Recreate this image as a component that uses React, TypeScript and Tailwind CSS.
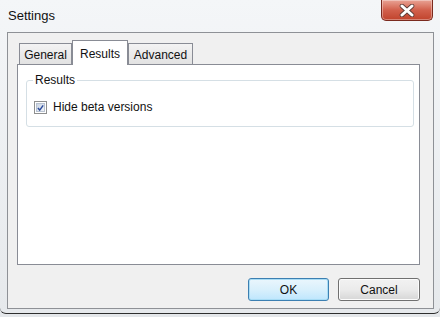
function CloseButton() {
  return (
    <div className="absolute top-0 left-[381px] w-[52px] h-[21px] rounded-b-[5px] border border-t-0 border-[#7a2a1e] bg-gradient-to-b from-[#e8a395] via-[#d2604c] to-[#c0432c] flex items-center justify-center shadow-[inset_0_0_0_1px_rgba(255,255,255,0.35)]">
      <svg width="16" height="13" viewBox="0 0 16 13">
        <path d="M3 2 L13 11 M13 2 L3 11" stroke="#5a3a36" strokeWidth="4.6" strokeLinecap="round" />
        <path d="M3 2 L13 11 M13 2 L3 11" stroke="#ffffff" strokeWidth="3" strokeLinecap="round" />
      </svg>
    </div>
  );
}

function Tab({ label, w, active }: { label: string; w: string; active?: boolean }) {
  if (active) {
    return (
      <div className={`${w} h-[25px] bg-white border border-b-0 border-[#898c95] flex items-start justify-center pt-[4px] relative z-10`}>
        {label}
      </div>
    );
  }
  return (
    <div className={`${w} h-[21px] mb-px bg-gradient-to-b from-[#f3f3f3] to-[#e2e2e2] border border-b-0 border-[#898c95] flex items-center justify-center pt-[2px]`}>
      {label}
    </div>
  );
}

function Checkbox() {
  return (
    <div className="w-[13px] h-[13px] border border-[#8e8f8f] bg-white p-px">
      <div className="w-full h-full bg-gradient-to-br from-[#cbd5e4] to-[#f0f3f8] border border-[#b8c2d0] flex items-center justify-center">
        <svg width="10" height="10" viewBox="0 0 10 10">
          <path d="M1.3 5 L3.9 8 L8.8 1.2" fill="none" stroke="#2c4c9c" strokeWidth="2.1" />
        </svg>
      </div>
    </div>
  );
}

export default function App() {
  return (
    <div className="w-[440px] h-[317px] bg-[#e4e7ea] overflow-hidden font-['Liberation_Sans',Arial,sans-serif] text-[#111]">
      <div className="relative h-[314px] bg-gradient-to-b from-[#f4f6f8] to-[#e6e9ec] border-b border-[#2e2e2e] rounded-b-[6px] flex flex-col">
        <div className="h-[32px] pl-[8px] pt-[8px] text-[13px] leading-[16px]">Settings</div>
        <CloseButton />

        <div className="ml-[7px] w-[427px] h-[277px] bg-[#f0f0f0] border border-[#8e9196] flex flex-col pl-[9px] pt-[7px] text-[12px]">
          <div className="h-[25px] -mb-px flex items-end pl-[2px] relative z-10">
            <Tab label="General" w="w-[53px]" />
            <Tab label="Results" w="w-[56px]" active />
            <Tab label="Advanced" w="w-[65px]" />
          </div>

          <div className="w-[403px] h-[201px] bg-white border border-[#898c95] pl-[8px] pt-[15px]">
            <div className="relative w-[388px] h-[47px] border border-[#d5dfe5] rounded-[3px] pl-[7px] pt-[20px]">
              <div className="absolute left-[6px] -top-[8px] px-[2px] bg-white leading-[14px]">Results</div>
              <div className="flex items-center gap-[6px]">
                <Checkbox />
                <span className="leading-[13px]">Hide beta versions</span>
              </div>
            </div>
          </div>

          <div className="w-[403px] mt-[13px] flex justify-end gap-[9px]">
            <button className="w-[81px] h-[23px] rounded-[3px] border border-[#3c7fb1] bg-gradient-to-b from-[#eaf6fd] via-[#d9f0fc] to-[#bee6fd] shadow-[inset_0_0_0_1px_#a8dcf5] text-[12px]">
              OK
            </button>
            <button className="w-[82px] h-[23px] rounded-[3px] border border-[#707070] bg-gradient-to-b from-[#f2f2f2] via-[#ebebeb] to-[#d6d6d6] shadow-[inset_0_0_0_1px_#fcfcfc] text-[12px]">
              Cancel
            </button>
          </div>
        </div>
      </div>
    </div>
  );
}
